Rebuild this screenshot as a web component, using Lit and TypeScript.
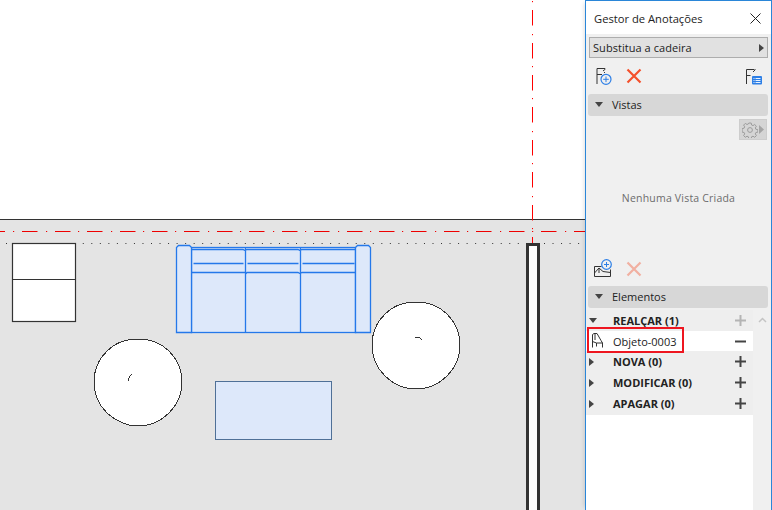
import { LitElement, html, css, svg } from "lit";
import { customElement } from "lit/decorators.js";

const plus = (color: string) => svg`<svg class="pm" width="15" height="15" viewBox="0 0 15 15"><path d="M2 7.500h11M7.500 2v11" stroke="${color}" stroke-width="2" fill="none"/></svg>`;
const minus = svg`<svg class="pm" width="15" height="15" viewBox="0 0 15 15"><path d="M2 7.500h11" stroke="#444" stroke-width="2" fill="none"/></svg>`;
const triD = svg`<svg class="tri" width="8" height="5" viewBox="0 0 8 5"><path d="M0 0h8L4 5z" fill="#444"/></svg>`;
const triR = svg`<svg class="tri" width="5" height="8" viewBox="0 0 5 8"><path d="M0 0l5 4-5 4z" fill="#444"/></svg>`;
const cross = (op: number) => svg`<svg width="16" height="16" viewBox="0 0 16 16" opacity="${op}"><path d="M1.500 1.500l13 13M14.500 1.500l-13 13" stroke="#f4512c" stroke-width="2.200" fill="none"/></svg>`;

const hDots = [13, 46, 78, 111, 143, 175, 208, 240, 273, 305, 338, 370, 402, 435, 467, 500, 532, 565];
const hPath = "M0 231.500h5" + hDots.map((d) => `M${d} 231.500h1.200M${d + 9} 231.500h${d === 565 ? 12 : 15.500}`).join("");
const vDots = [1, 34, 66, 98, 131, 163, 196, 228];
const vPath = vDots.map((d) => `M532.500 ${d}v1.200M532.500 ${d + 9}v${d === 228 ? 6 : 15.500}`).join("");

@customElement("app-root")
export class AppRoot extends LitElement {
  static styles = css`
    :host { display: block; width: 772px; height: 510px; overflow: hidden; }
    .root { display: grid; grid-template-columns: 585px 187px; height: 510px; font-family: "Open Sans", "Noto Sans", sans-serif; color: #222; }
    .canvas { display: block; width: 585px; height: 510px; }
    .panel { position: relative; box-sizing: border-box; height: 510px; background: #f0f0f0; border: 1px solid #2a86d8; border-bottom: none; display: flex; flex-direction: column; box-shadow: -4px 0 4px -3px rgba(0,0,0,0.12); }
    .title { height: 33px; flex: none; background: #fff; display: flex; align-items: center; justify-content: space-between; padding: 2px 10px 0 8px; box-sizing: border-box; font-size: 11.2px; }
    .drop { margin: 3px 3px 0 3px; height: 21px; flex: none; box-sizing: border-box; background: #e1e1e1; border: 1px solid #adadad; display: flex; align-items: center; justify-content: space-between; padding: 0 3px 0 3px; font-size: 11px; letter-spacing: .05px; }
    .tools { display: flex; align-items: center; height: 33px; flex: none; box-sizing: border-box; padding: 3px 8px 0 9px; gap: 13px; }
    .tools .sp { flex: 1; }
    .hdr { margin: 3px 3px 0 2px; height: 22px; background: #d7d7d7; border-radius: 3px; display: flex; align-items: center; padding: 0 0 2px 7px; box-sizing: border-box; gap: 9px; font-size: 11px; flex: none; }
    .gearrow { display: flex; justify-content: flex-end; padding: 3px 4px 0 0; flex: none; }
    .gear { width: 28px; height: 21px; background: #d5d5d5; border: 1px solid #cdcdcd; box-sizing: border-box; display: flex; align-items: center; justify-content: center; gap: 1px; }
    .empty { height: 115px; flex: none; display: flex; align-items: center; justify-content: center; font-size: 10.5px; color: #6c6c6c; letter-spacing: .2px; box-sizing: border-box; }
    .tools2 { display: flex; align-items: center; height: 28px; flex: none; padding: 0 0 0 8px; gap: 13px; }
    .tools2 svg:first-child { margin-top: -2px; }
    .tree { display: grid; grid-template-columns: 167px 18px; flex: 1; margin-top: 2px; }
    .list { background: #fff; }
    .row { height: 21px; background: #eeeeee; display: flex; align-items: center; font-size: 11px; font-weight: 700; position: relative; padding-left: 27px; box-sizing: border-box; }
    .row.last { height: 22px; padding-bottom: 1px; }
    .row .tw { position: absolute; left: 3px; top: 0; bottom: 0; width: 12px; display: flex; align-items: center; }
    .row .pm { position: absolute; left: 147px; top: 3px; }
    .row.sel { background: #fff; font-weight: 400; font-size: 11px; height: 20px; }
    .chair { position: absolute; left: 5px; top: 1px; }
    .redbox { position: absolute; left: 1px; top: 326px; width: 97px; height: 26px; box-sizing: border-box; border: 2px solid #ee1620; }
    .scroll { background: #f0f0f0; display: flex; justify-content: center; padding-top: 7px; align-items: flex-start; }
    .close { display: block; }
  `;

  private sofa() {
    const blue = "#2478ea";
    const fill = "#dde8fa";
    return svg`
      <g stroke="${blue}" stroke-width="1.300" fill="${fill}">
        <rect x="191.500" y="247.500" width="164" height="85"/>
        <path d="M176.500 332.500V247.500l2-2h11l2 2v85z"/>
        <path d="M355.500 332.500V247.500l2-2h11l2 2v85z"/>
        <path d="M192 249.500h51l2 1 2-1h51l2 1 2-1h53M192 272.500h53l1 1 1-1h51l2 1 2-1h53M245.500 248v84.500M300.500 248v84.500" fill="none"/>
        <path d="M193.500 263.500h50M247.500 263.500h51M302.500 263.500h52" fill="none"/>
      </g>`;
  }

  private canvas() {
    const dark = "#333";
    return svg`<svg class="canvas" viewBox="0 0 585 510" width="585" height="510">
      <rect width="585" height="220" fill="#fff"/>
      <rect y="220" width="585" height="290" fill="#e4e4e4"/>
      <path d="M0 219.500h585" stroke="${dark}" stroke-width="1.200"/>
      <path d="${vPath}" stroke="#f00" stroke-width="1" fill="none"/>
      <path d="${hPath}" stroke="#ee0000" stroke-width="1" fill="none"/>
      <path d="M6 243.500H526" stroke="#333" stroke-width="1" stroke-dasharray="1 7.530"/>
      <path d="M544 243.500H585" stroke="#333" stroke-width="1" stroke-dasharray="1 7.530"/>
      <rect x="12.500" y="243.500" width="63" height="78" fill="#fff" stroke="${dark}" stroke-width="1.200"/>
      <path d="M12.500 279.500h63" stroke="${dark}" stroke-width="1.200"/>
      ${this.sofa()}
      <rect x="215.500" y="381.500" width="116" height="58" fill="#dde8fa" stroke="#4f7097"/>
      <g shape-rendering="crispEdges">
        <path d="M138 339c12 0 23 4 31 12 8 8 13 19 13 31 0 13-5 23-13 31-8 8-19 13-31 13-12 0-22-5-31-13-8-8-13-19-13-31 0-12 5-23 13-31 8-8 19-12 31-12z" fill="#fff" stroke="${dark}" stroke-width="1"/>
        <path d="M128 381c0-3 2-5 4-7" fill="none" stroke="${dark}" stroke-width="1"/>
        <path d="M416 302c12 0 23 4 31 12 8 8 13 19 13 31 0 13-5 23-13 31-8 8-19 13-31 13-12 0-22-4-31-13-8-8-13-19-13-31 0-12 5-23 13-31 8-8 19-12 31-12z" fill="#fff" stroke="${dark}" stroke-width="1"/>
        <path d="M415 337c3 0 6 1 7 3" fill="none" stroke="${dark}" stroke-width="1"/>
      </g>
      <rect x="527.500" y="244.500" width="11" height="270" fill="#fff" stroke="${dark}" stroke-width="3"/>
    </svg>`;
  }

  render() {
    return html`<div class="root">
      ${this.canvas()}
      <div class="panel">
        <div class="title"><span>Gestor de Anotações</span>
          <svg class="close" width="11" height="11" viewBox="0 0 11 11"><path d="M.5.5l10 10M10.500.5l-10 10" stroke="#222" stroke-width="1" fill="none"/></svg></div>
        <div class="drop"><span>Substitua a cadeira</span>${triR}</div>
        <div class="tools">
          <svg width="18" height="18" viewBox="0 0 18 18"><path d="M2 17V1.500h8M2 7.500h5M8 4l2.500-2M9 5.500h1" stroke="#333" fill="none"/><circle cx="11" cy="12.300" r="5" fill="#f0f0f0" stroke="#2d7fe6" stroke-width="1.200"/><path d="M11 9.500v5.600M8.200 12.300h5.600" stroke="#2d7fe6"/></svg>
          ${cross(1)}
          <span class="sp"></span>
          <svg width="18" height="18" viewBox="0 0 18 18"><path d="M1.500 17V2.500h8M1.500 8.500h4M8 5l2.500-2.500" stroke="#333" fill="none"/><rect x="7" y="9" width="10" height="8.500" rx="1" fill="#2d7fe6"/><path d="M8.500 11.500h1M10.500 11.500h5M8.500 13.500h1M10.500 13.500h5M8.500 15.500h1M10.500 15.500h5" stroke="#fff" stroke-width=".9"/></svg>
        </div>
        <div class="hdr">${triD}<span>Vistas</span></div>
        <div class="gearrow"><div class="gear">
          <svg width="16" height="16" viewBox="0 0 16 16"><path d="M6.800 1h2.400l.4 2 1.400.6 1.700-1.100 1.700 1.700-1.100 1.700.6 1.400 2 .4v2.400l-2 .4-.6 1.400 1.100 1.700-1.700 1.700-1.700-1.100-1.400.6-.4 2H6.800l-.4-2-1.400-.6-1.700 1.100-1.700-1.700 1.100-1.700-.6-1.400-2-.4V6.600l2-.4.6-1.400-1.100-1.700 1.700-1.700 1.700 1.100 1.400-.6z" fill="none" stroke="#9c9c9c"/><circle cx="8" cy="8" r="2.400" fill="none" stroke="#9c9c9c"/></svg>
          <svg width="5" height="9" viewBox="0 0 5 9"><path d="M0 0l5 4.500L0 9z" fill="#a5a5a5"/></svg>
        </div></div>
        <div class="empty">Nenhuma Vista Criada</div>
        <div class="tools2">
          <svg width="19" height="19" viewBox="0 0 19 19"><path d="M.5 17.500V7.500h7M.5 17.500h16v-7M.5 14l4.500-5 4 3.500 7.500 1M5 9v5" stroke="#333" fill="none"/><circle cx="12.500" cy="5.500" r="4.800" fill="#f0f0f0" stroke="#2d7fe6" stroke-width="1.200"/><path d="M12.500 3v5M10 5.500h5" stroke="#2d7fe6"/></svg>
          ${cross(0.4)}
        </div>
        <div class="hdr">${triD}<span>Elementos</span></div>
        <div class="tree">
          <div class="list">
            <div class="row"><span class="tw">${triD}</span>REALÇAR (1)${plus("#b4b4b4")}</div>
            <div class="row sel">
              <svg class="chair" width="13" height="17" viewBox="0 0 13 17"><path d="M1.500 15.500V2.500l1.500-1h3L10 8.500l1.500 2.500v4.500M1.500 9.500l4 1.500h6M5.500 11v3.500M4 2v6" fill="none" stroke="#333"/></svg>
              Objeto-0003${minus}</div>
            <div class="row"><span class="tw">${triR}</span>NOVA (0)${plus("#444")}</div>
            <div class="row"><span class="tw">${triR}</span>MODIFICAR (0)${plus("#444")}</div>
            <div class="row last"><span class="tw">${triR}</span>APAGAR (0)${plus("#444")}</div>
          </div>
          <div class="scroll"><svg width="9" height="6" viewBox="0 0 9 6"><path d="M1 5l3.500-3.500L8 5" fill="none" stroke="#c4c4c4" stroke-width="1.500"/></svg></div>
        </div>
        <div class="redbox"></div>
      </div>
    </div>`;
  }
}
